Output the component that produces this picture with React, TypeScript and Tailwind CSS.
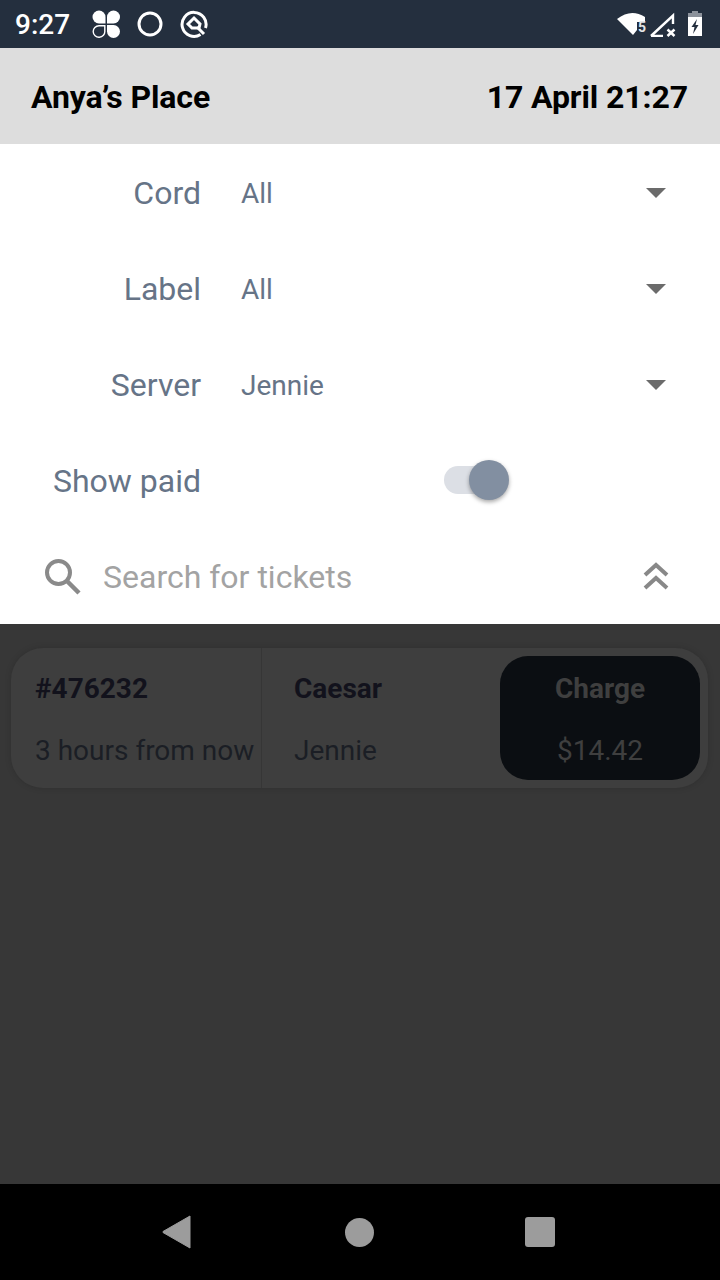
const FilterRow = ({ label, value }: { label: string; value: string }) => {
  return (
    <div className="flex h-24 items-center pt-[2px]">
      <div className="w-[201px] text-right text-[32px] text-[#667487]">{label}</div>
      <div className="ml-10 mt-[2px] flex-1 text-[28px] text-[#667487]">{value}</div>
      <div className="mr-[54px] h-0 w-0 border-x-[10px] border-t-[10px] border-x-transparent border-t-[#6b6b6b]" />
    </div>
  );
};

const StatusIcons = () => {
  return (
    <div className="ml-[22px] flex items-center gap-4">
      <svg width="28" height="28" viewBox="0 0 28 28">
        <path d="M13.500 13.500H7A6.500 6.500 0 1 1 13.500 7Z" fill="#fff" />
        <path d="M15 13.500V7A6.500 6.500 0 1 1 21.500 13.500Z" fill="#fff" />
        <path d="M15 15H21.500A6.500 6.500 0 1 1 15 21.500Z" fill="#fff" />
        <path d="M12.800 15.700V21A5.800 5.800 0 1 1 7 15.700Z" fill="none" stroke="#fff" strokeWidth="1.400" />
      </svg>
      <svg width="28" height="28" viewBox="0 0 28 28">
        <circle cx="14" cy="14" r="11" fill="none" stroke="#fff" strokeWidth="3" />
      </svg>
      <svg width="28" height="28" viewBox="0 0 28 28">
        <path d="M20.500 24.500A12 12 0 1 1 25.500 18" fill="none" stroke="#fff" strokeWidth="3" />
        <path d="M14 8L20 14L19 18H12L8 14Z" fill="none" stroke="#fff" strokeWidth="3" />
        <path d="M17 17L24 24" stroke="#fff" strokeWidth="3" />
      </svg>
    </div>
  );
};

const SystemIcons = () => {
  return (
    <div className="mr-[18px] flex items-start self-start pt-[11px]">
      <svg width="31" height="26" viewBox="0 0 31 26">
        <path d="M0 8Q14-3 28 6V11H20V19L16 24Z" fill="#fff" />
        <text x="21" y="21" fontSize="14" fontWeight="700" fill="#e4e6e8" fontFamily="Roboto, sans-serif">5</text>
      </svg>
      <svg width="28" height="26" viewBox="0 0 28 26">
        <path d="M3 25L25 4.500V13M3 25H15" fill="none" stroke="#fff" strokeWidth="2.400" />
        <path d="M19.500 18.500L26.500 25M26.500 18.500L19.500 25" stroke="#fff" strokeWidth="2.500" />
      </svg>
      <svg className="ml-3" width="14" height="25" viewBox="0 0 14 25">
        <rect x="4" y="0" width="6" height="2" fill="#8c929b" />
        <rect x="0" y="2" width="14" height="4" fill="#8c929b" />
        <path d="M0 6H14V25H0Z" fill="#fff" />
        <path d="M9 8L3.500 16H6.500L5 23L10.500 14H7.500Z" fill="#242f3e" />
      </svg>
    </div>
  );
};

export default function App() {
  return (
    <div className="flex h-[1280px] w-[720px] flex-col overflow-hidden font-['Roboto',sans-serif]">
      {/* status bar */}
      <div className="flex h-12 items-center bg-[#242f3e]">
        <span className="ml-[15px] mt-[2px] text-[28px] font-medium text-white">9:27</span>
        <StatusIcons />
        <div className="flex-1" />
        <SystemIcons />
      </div>

      {/* header */}
      <div className="flex h-24 items-center justify-between bg-[#dddddd] pl-[31px] pr-[32px] pt-[2px] text-[32px] font-bold tracking-[-0.1px] text-black">
        <span>Anya’s Place</span>
        <span>17 April 21:27</span>
      </div>

      {/* filters */}
      <div className="bg-white">
        <FilterRow label="Cord" value="All" />
        <FilterRow label="Label" value="All" />
        <FilterRow label="Server" value="Jennie" />
        <div className="flex h-24 items-center">
          <div className="mt-[2px] w-[201px] text-right text-[32px] text-[#667487]">Show paid</div>
          <div className="relative ml-[243px] h-7 w-[56px] rounded-full bg-[#dcdfe5]">
            <div className="absolute left-[25px] top-[-6px] h-10 w-10 rounded-full bg-[#828fa1] shadow-[0_2px_4px_rgba(0,0,0,0.35)]" />
          </div>
        </div>
        <div className="flex h-24 items-center">
          <svg className="ml-[44px]" width="37" height="37" viewBox="0 0 37 37">
            <circle cx="14.500" cy="14.500" r="11.500" fill="none" stroke="#8a8a8a" strokeWidth="4" />
            <path d="M23 23L35 35" stroke="#8a8a8a" strokeWidth="4.500" />
          </svg>
          <span className="ml-[22px] mt-[2px] flex-1 text-[32px] text-[#a3a3a3]">Search for tickets</span>
          <svg className="mr-[51px]" width="26" height="28" viewBox="0 0 26 28">
            <path d="M2 13L13 3L24 13M2 26L13 16L24 26" fill="none" stroke="#888888" strokeWidth="4" />
          </svg>
        </div>
      </div>

      {/* dimmed ticket list */}
      <div className="flex-1 bg-[#373737] pl-[11px] pt-6">
        <div className="flex h-[140px] w-[697px] items-stretch rounded-[32px] bg-[#3e3e3e] shadow-[0_0_6px_rgba(0,0,0,0.15)]">
          <div className="flex w-[251px] flex-col border-r border-[#363636] pl-6">
            <span className="mt-[21px] text-[28px] font-bold leading-10 text-[#12121c]">#476232</span>
            <span className="mt-[22px] text-[28px] leading-10 text-[#1b1e25]">3 hours from now</span>
          </div>
          <div className="flex flex-1 flex-col pl-8">
            <span className="mt-[21px] text-[28px] font-bold leading-10 text-[#12121c]">Caesar</span>
            <span className="mt-[22px] text-[28px] leading-10 text-[#1b1e25]">Jennie</span>
          </div>
          <div className="my-2 mr-2 flex w-[200px] flex-col items-center rounded-[28px] bg-[#0b0e12]">
            <span className="mt-[13px] text-[28px] font-bold leading-10 text-[#3f3f3f]">Charge</span>
            <span className="mt-[22px] text-[28px] leading-10 text-[#3f3f3f]">$14.42</span>
          </div>
        </div>
      </div>

      {/* nav bar */}
      <div className="flex h-24 items-center bg-black pl-[162px]">
        <svg width="30" height="34" viewBox="0 0 30 34">
          <path d="M28 1L1 16.500V17.500L28 33Z" fill="#9c9c9c" stroke="#9c9c9c" strokeLinejoin="round" />
        </svg>
        <div className="ml-[153px] h-[29px] w-[29px] rounded-full bg-[#9c9c9c]" />
        <div className="ml-[151px] h-[30px] w-[30px] rounded-[3px] bg-[#9c9c9c]" />
      </div>
    </div>
  );
}
